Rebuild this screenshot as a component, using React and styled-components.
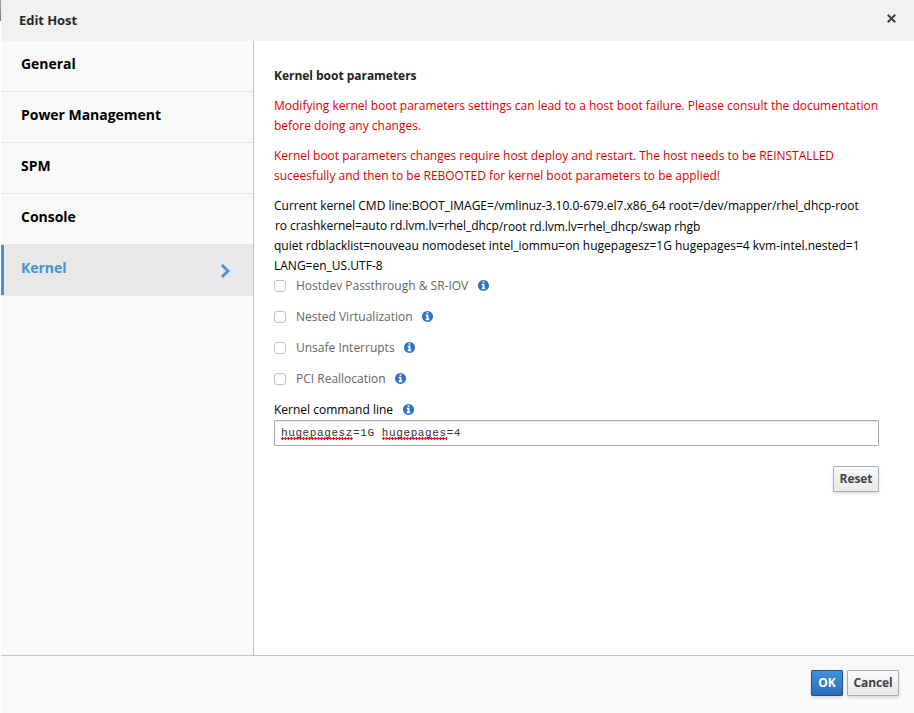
import React from 'react';
import styled, { createGlobalStyle } from 'styled-components';

const GlobalStyle = createGlobalStyle`
  * { box-sizing: border-box; }
  body { margin: 0; background: #fff; }
`;

const Dialog = styled.div`
  width: 914px;
  height: 713px;
  display: flex;
  flex-direction: column;
  padding-left: 1px;
  overflow: hidden;
  font: 12px/20px "Open Sans", sans-serif;
  color: #000;
  background: linear-gradient(#aaa, #777) 0 0 / 1px 21px no-repeat, #fff;
`;

const Header = styled.header`
  flex: 0 0 41px;
  display: flex;
  justify-content: space-between;
  align-items: flex-start;
  padding: 10px 18px 0;
  background: #f1f1f1;
`;

const Title = styled.h1`
  margin: 0;
  font-size: 13px;
  line-height: 20px;
  letter-spacing: -0.06px;
  font-weight: 700;
  color: #292929;
`;

const CloseButton = styled.button`
  display: flex;
  margin: 4px 0 0;
  padding: 0;
  border: 0;
  background: none;
  color: #444;
`;

const Body = styled.div`
  flex: 1;
  display: flex;
  min-height: 0;
`;

const Nav = styled.nav`
  flex: 0 0 253px;
  border-right: 1px solid #c4c4c4;
  background: #f9f9f9;
`;

const NavItem = styled.div`
  height: 51px;
  display: flex;
  justify-content: space-between;
  padding: 13px 22px 0 20px;
  border-bottom: 1px solid #e6e6e6;
  font-size: 14px;
  letter-spacing: -0.03px;
  font-weight: 700;
  color: #000;
`;

const ActiveNavItem = styled(NavItem)`
  margin-top: -1px;
  height: 52px;
  padding-top: 14px;
  border-bottom: 0;
  background: linear-gradient(#3f93d6, #3f93d6) 0 1px / 3px 50px no-repeat, #e8e8e6;
  color: #3f93d6;
  svg { margin-top: 6px; }
`;

const Content = styled.main`
  flex: 1;
  padding: 25px 35px 0 20px;
`;

const Heading = styled.h2`
  margin: 0 0 10px;
  font-size: 12px;
  line-height: 20px;
  letter-spacing: -0.03px;
  font-weight: 700;
  color: #222;
`;

const Warning = styled.p`
  margin: 0 0 10px;
  color: #dc0000;
`;

const Line = styled.span`
  display: block;
  white-space: nowrap;
  letter-spacing: ${(p) => p.$spacing || 0}px;
  padding-left: ${(p) => p.$indent || 0}px;
`;

const Lowered = styled.span`
  display: inline-block;
  transform: translateY(1px);
`;

const Option = styled.div`
  height: 31px;
  display: flex;
  align-items: flex-start;
  white-space: nowrap;
  color: #666;
`;

const Checkbox = styled.span`
  width: 12px;
  height: 12px;
  margin: 4px 10px 0 0;
  border: 1px solid #c2c2c2;
  border-radius: 3px;
  background: #fff;
`;

const Info = styled.svg`
  width: 11px;
  height: 11px;
  margin: 4px 0 0 9.5px;
  fill: #2b73c4;
`;

const FieldLabel = styled.div`
  display: flex;
  height: 20px;
`;

const Field = styled.div`
  height: 26px;
  padding: 2px 6px;
  border: 1px solid #a8a8a8;
  border-radius: 1px;
  box-shadow: inset 0 1px 1px rgba(0, 0, 0, 0.07);
  font-family: "Liberation Mono", monospace;
  font-size: 11px;
  letter-spacing: 0.6px;
  white-space: pre;
  color: #333;
`;

const Misspelled = styled.span`
  display: inline-block;
  height: 17px;
  background: radial-gradient(circle, #e8202a 1.1px, transparent 1.5px) 0 100% / 3px 3px repeat-x;
`;

const Actions = styled.div`
  display: flex;
  justify-content: flex-end;
  margin-top: 20px;
`;

const Button = styled.button`
  width: ${(p) => p.$width}px;
  height: 26px;
  padding: 0;
  border: 1px solid ${(p) => (p.$primary ? '#1f5290' : '#aeaeae')};
  border-radius: 1px;
  background: ${(p) => (p.$primary ? 'linear-gradient(#3d92d4, #2f6dbd)' : 'linear-gradient(#fafafa, #e9e9e9)')};
  box-shadow: 0 2px 3px rgba(0, 0, 0, 0.12);
  font: 700 12px/20px "Open Sans", sans-serif;
  letter-spacing: -0.1px;
  color: ${(p) => (p.$primary ? '#fff' : '#404348')};
`;

const Footer = styled.footer`
  flex: 0 0 58px;
  display: flex;
  justify-content: flex-end;
  gap: 4px;
  padding: 14px 15px 0;
  border-top: 1px solid #c4c4c4;
  background: #f9f9f9;
`;

const InfoIcon = () => (
  <Info viewBox="0 128 1536 1536">
    <path d="M1024 1376v-160q0-14-9-23t-23-9h-96v-512q0-14-9-23t-23-9h-320q-14 0-23 9t-9 23v160q0 14 9 23t23 9h96v320h-96q-14 0-23 9t-9 23v160q0 14 9 23t23 9h448q14 0 23-9t9-23zm-128-896v-160q0-14-9-23t-23-9h-192q-14 0-23 9t-9 23v160q0 14 9 23t23 9h192q14 0 23-9t9-23zm640 416q0 209-103 385.5t-279.5 279.5-385.5 103-385.5-103-279.5-279.5-103-385.5 103-385.5 279.5-279.5 385.5-103 385.5 103 279.5 279.5 103 385.5z" />
  </Info>
);

const sections = ['General', 'Power Management', 'SPM', 'Console'];
const options = ['Hostdev Passthrough & SR-IOV', 'Nested Virtualization', 'Unsafe Interrupts', 'PCI Reallocation'];

export default function App() {
  return (
    <>
      <GlobalStyle />
      <Dialog>
        <Header>
          <Title>Edit Host</Title>
          <CloseButton aria-label="Close">
            <svg width="9" height="9" viewBox="0 0 9 9" fill="none" stroke="currentColor" strokeWidth="2">
              <path d="M0.7 0.7 8.3 8.3M8.3 0.7 0.7 8.3" />
            </svg>
          </CloseButton>
        </Header>
        <Body>
          <Nav>
            {sections.map((name) => <NavItem key={name}>{name}</NavItem>)}
            <ActiveNavItem>
              Kernel
              <svg width="10" height="14" viewBox="0 0 10 14" fill="none" stroke="currentColor" strokeWidth="2.8">
                <path d="M0.9 1 7 7 0.9 13" />
              </svg>
            </ActiveNavItem>
          </Nav>
          <Content>
            <Heading>Kernel boot parameters</Heading>
            <Warning>
              <Line>Modifying kernel boot parameters settings can lead to a host boot failure. Please consult the documentation</Line>
              <Line>before doing any changes.</Line>
            </Warning>
            <Warning>
              <Line $spacing={-0.022}>Kernel boot parameters changes require host deploy and restart. The host needs to be REINSTALLED</Line>
              <Line $spacing={-0.01}>suceesfully and then to be REBOOTED for kernel boot parameters to be applied!</Line>
            </Warning>
            <Line $spacing={-0.008}>Current kernel CMD line:BOOT_IMAGE=/vmlinuz-3.10.0-679.el7.x86_64 root=/dev/mapper/rhel_dhcp-root</Line>
            <Line $indent={1} $spacing={-0.055}>ro crashkernel=auto rd.lvm.lv=rhel_dhcp<Lowered>/root rd.lvm.lv=rhel_dhcp/swap rhgb</Lowered></Line>
            <Line>quiet rdblacklist=nouveau nomodeset intel_iommu=on hugepagesz=1G hugepages=4 kvm-intel.nested=1</Line>
            <Line>LANG=en_US.UTF-8</Line>
            {options.map((name) => (
              <Option key={name}>
                <Checkbox />
                {name}
                <InfoIcon />
              </Option>
            ))}
            <FieldLabel>Kernel command line<InfoIcon /></FieldLabel>
            <Field><Misspelled>hugepagesz</Misspelled>=1G <Misspelled>hugepages</Misspelled>=4</Field>
            <Actions><Button $width={46}>Reset</Button></Actions>
          </Content>
        </Body>
        <Footer>
          <Button $primary $width={32}>OK</Button>
          <Button $width={52}>Cancel</Button>
        </Footer>
      </Dialog>
    </>
  );
}
